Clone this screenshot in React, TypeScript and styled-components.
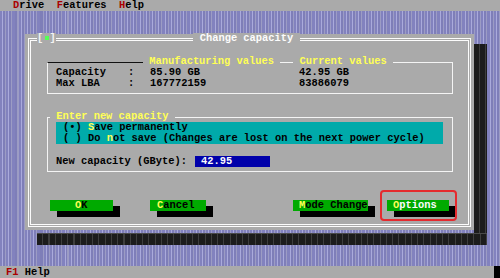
import styled, { createGlobalStyle } from 'styled-components'

const GlobalStyle = createGlobalStyle`
  html, body {
    margin: 0;
    padding: 0;
    background: #aaaaaa;
  }
`

const GRAY = '#aaaaaa'
const YELLOW = '#ffff55'

const Screen = styled.div`
  position: relative;
  width: 500px;
  height: 278px;
  display: flex;
  flex-direction: column;
  overflow: hidden;
  background: ${GRAY};
  color: #000;
  font-family: "Liberation Mono", "DejaVu Sans Mono", monospace;
  font-size: 10.4px;
  font-weight: bold;
  line-height: 11px;
  white-space: pre;
`

const MenuBar = styled.div`
  height: 11px;
  display: flex;
  gap: 12.5px;
  padding-left: 13px;
`

const Hot = styled.span<{ $color?: string }>`
  color: ${(p) => p.$color || YELLOW};
`

const Desktop = styled.div`
  flex: 1;
  padding: 23px 0 0 25px;
  background: repeating-linear-gradient(
    90deg,
    #8282be 0px,
    #8282be 2px,
    #aaaadc 2px,
    #aaaadc 3px,
    #7e7eb8 3px,
    #7e7eb8 5px,
    #9c9cc4 5px,
    #9c9cc4 6.25px
  );
`

const shadowFill = `repeating-linear-gradient(90deg, #1c1c1c 0px, #1c1c1c 5px, #3e3e3e 5px, #3e3e3e 6.25px)`

const Dialog = styled.div`
  position: relative;
  box-sizing: border-box;
  width: 449px;
  height: 196px;
  padding: 4px 3px 3px 3px;
  display: flex;
  background: ${GRAY};

  &::before {
    content: '';
    position: absolute;
    left: 449px;
    top: 10px;
    width: 13px;
    height: 201px;
    background: ${shadowFill};
  }
  &::after {
    content: '';
    position: absolute;
    left: 12px;
    top: 199px;
    width: 450px;
    height: 12px;
    background: ${shadowFill};
    border-top: 1px solid #4a4a4a;
    box-sizing: border-box;
  }
`

const Frame = styled.div`
  position: relative;
  flex: 1;
  min-width: 0;
  display: flex;
  flex-direction: column;
  padding: 21px 15px 0 16px;
  border: 3px double #fcfcfc;
`

const TitleRow = styled.div`
  position: absolute;
  top: -8px;
  left: 6px;
  right: 0;
  height: 11px;
  display: grid;
  grid-template-columns: 1fr auto 1fr;
`

const CloseBox = styled.div`
  justify-self: start;
  display: flex;
  align-items: center;
  background: ${GRAY};
  color: #f4f4f4;
`

const CloseMark = styled.span`
  display: inline-block;
  width: 6.25px;
  height: 11px;
  position: relative;

  &::after {
    content: '';
    position: absolute;
    left: 1.5px;
    top: 3px;
    width: 4px;
    height: 4px;
    background: #55ff55;
  }
`

const Title = styled.div`
  background: ${GRAY};
  color: #fcfcfc;
  margin-right: 12px;
`

const GroupBox = styled.div<{ $top: string; $gap?: number }>`
  position: relative;
  margin-top: ${(p) => p.$gap || 0}px;
  border: 1px solid #f4f4f4;
  border-top-color: ${(p) => p.$top};
`

const GroupHead = styled.div<{ $left: number }>`
  position: absolute;
  top: -7px;
  left: ${(p) => p.$left}px;
  right: -1px;
  height: 11px;
  display: flex;
  align-items: center;
`

const Legend = styled.span`
  background: ${GRAY};
  color: ${YELLOW};
`

const Rule = styled.span<{ $w?: number }>`
  height: 1px;
  margin-top: 1px;
  background: #f4f4f4;
  ${(p) => (p.$w ? `width: ${p.$w}px;` : 'flex: 1;')}
`

const ValueGrid = styled.div`
  display: grid;
  grid-template-columns: 72px 22px 149px auto;
  padding: 4px 0 4px 8px;
`

const EntryBody = styled.div`
  padding: 4px 9px 4px 8px;
`

const RadioPanel = styled.div`
  background: #00aaaa;
  padding-left: 7px;
`

const InputRow = styled.div`
  margin-top: 12px;
  display: flex;
  gap: 8px;
`

const Field = styled.div`
  width: 75px;
  padding-left: 6px;
  box-sizing: border-box;
  background: #0000aa;
  color: #fcfcfc;
`

const ButtonRow = styled.div`
  margin-top: 28px;
  display: flex;
  padding-left: 3px;
`

const Button = styled.div<{ $w: number; $pad: number; $gap: number; $focus?: boolean }>`
  box-sizing: border-box;
  width: ${(p) => p.$w}px;
  height: 11px;
  margin-left: ${(p) => p.$gap}px;
  padding-left: ${(p) => p.$pad}px;
  background: #00aa00;
  color: ${(p) => (p.$focus ? '#fcfcfc' : '#000')};
  box-shadow: 7px 6px 0 #000;
`

const Highlight = styled.div`
  position: absolute;
  left: 380px;
  top: 190px;
  width: 77px;
  height: 31px;
  box-sizing: border-box;
  border: 2px solid #e52a2e;
  border-radius: 4px;
`

const StatusBar = styled.div`
  height: 12px;
  display: flex;
  align-items: center;
  gap: 6.25px;
  padding-left: 6px;
`

const Cursor = styled.span`
  margin-left: auto;
  width: 6px;
  height: 12px;
  background: #000;
`

export default function App() {
  return (
    <Screen>
      <GlobalStyle />
      <MenuBar>
        <span><Hot $color="#aa0000">D</Hot>rive</span>
        <span><Hot $color="#aa0000">F</Hot>eatures</span>
        <span><Hot $color="#aa0000">H</Hot>elp</span>
      </MenuBar>

      <Desktop>
        <Dialog>
          <Frame>
            <TitleRow>
              <CloseBox>[<CloseMark />]</CloseBox>
              <Title> Change capacity </Title>
            </TitleRow>

            <GroupBox $top="#111111">
              <GroupHead $left={95}>
                <Legend> Manufacturing values </Legend>
                <Rule $w={13} />
                <Legend> Current values </Legend>
                <Rule />
              </GroupHead>
              <ValueGrid>
                <span>Capacity</span>
                <span>:</span>
                <span>85.90 GB</span>
                <span>42.95 GB</span>
                <span>Max LBA</span>
                <span>:</span>
                <span>167772159</span>
                <span>83886079</span>
              </ValueGrid>
            </GroupBox>

            <GroupBox $top="#f4f4f4" $gap={23}>
              <GroupHead $left={0}>
                <Rule $w={2} />
                <Legend> Enter new capacity </Legend>
                <Rule />
              </GroupHead>
              <EntryBody>
                <RadioPanel>
                  <div>(•) <Hot>S</Hot>ave permanently</div>
                  <div>( ) Do <Hot>n</Hot>ot save (Changes are lost on the next power cycle)</div>
                </RadioPanel>
                <InputRow>
                  <span>New capacity (GByte):</span>
                  <Field>42.95</Field>
                </InputRow>
              </EntryBody>
            </GroupBox>

            <ButtonRow>
              <Button $w={63} $pad={25} $gap={0}><Hot>O</Hot>K</Button>
              <Button $w={56} $pad={7} $gap={37}><Hot>C</Hot>ancel</Button>
              <Button $w={75} $pad={6} $gap={87}><Hot>M</Hot>ode Change</Button>
              <Button $w={62} $pad={6} $gap={19} $focus><Hot>O</Hot>ptions</Button>
            </ButtonRow>
          </Frame>
        </Dialog>
      </Desktop>

      <StatusBar>
        <Hot $color="#aa0000">F1</Hot>
        <span>Help</span>
        <Cursor />
      </StatusBar>

      <Highlight />
    </Screen>
  )
}
